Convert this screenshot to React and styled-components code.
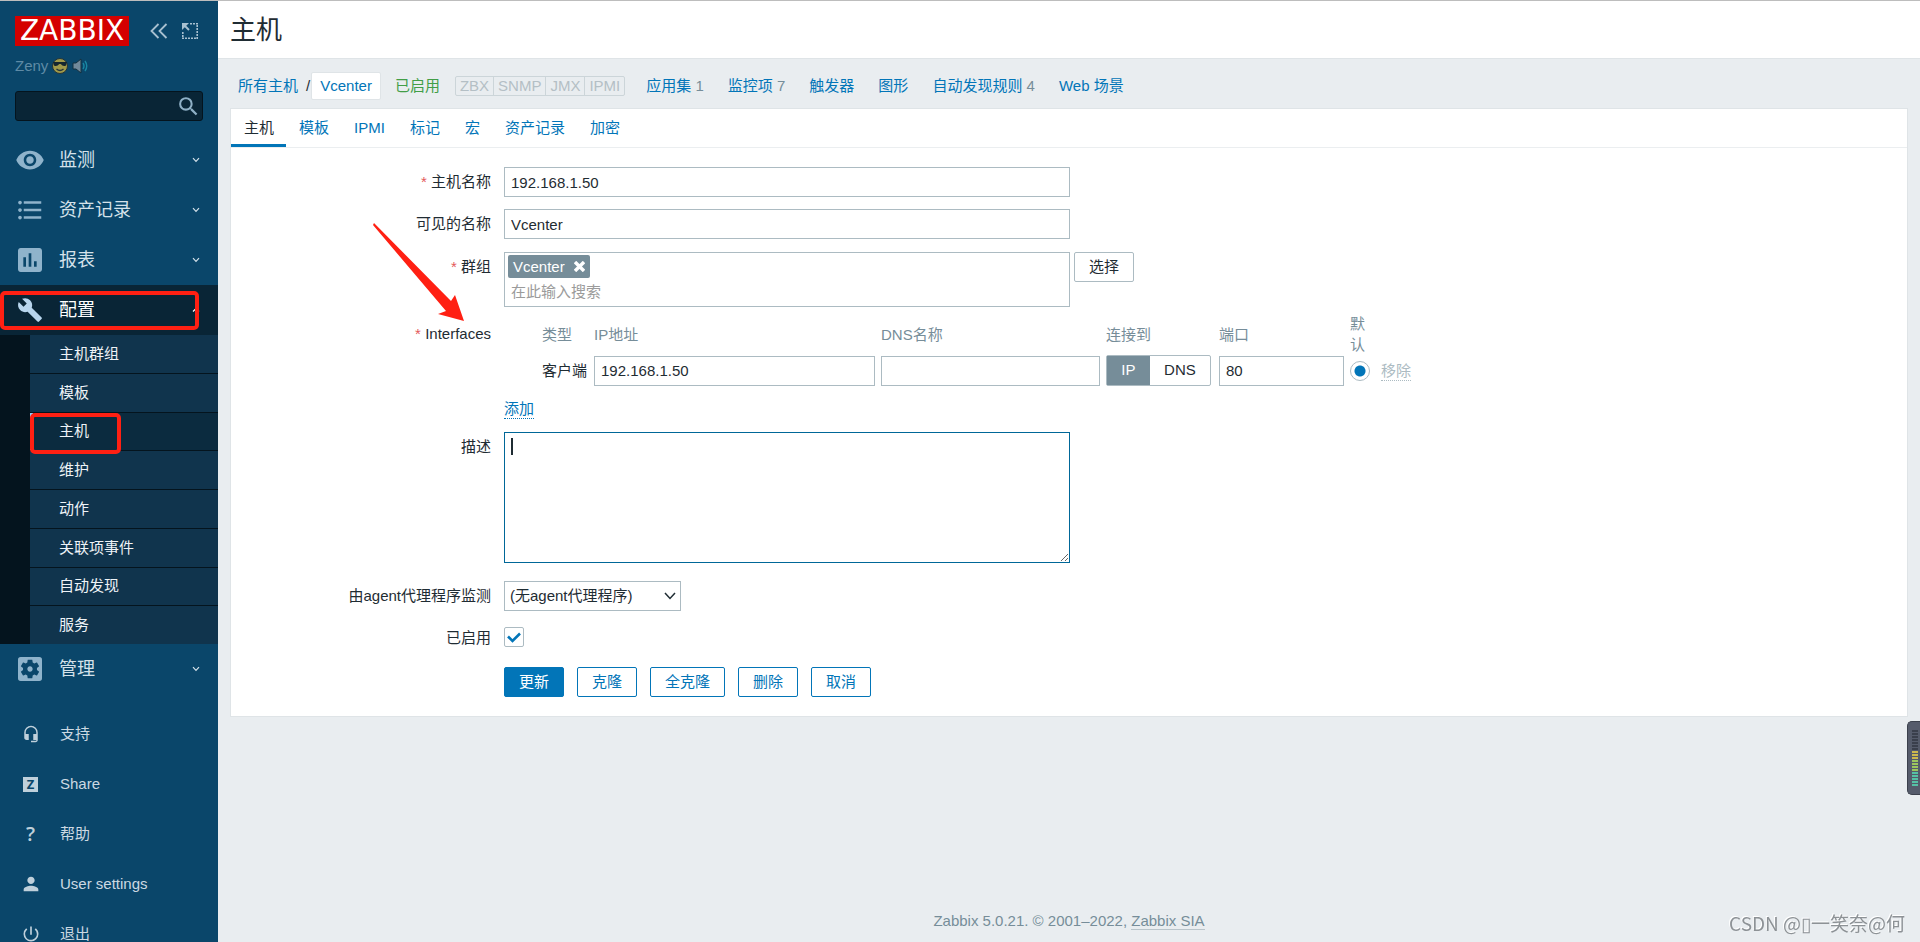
import React from "react";
import styled, { createGlobalStyle } from "styled-components";
import {
  MdVisibility,
  MdFormatListBulleted,
  MdAssessment,
  MdBuild,
  MdSettingsApplications,
  MdHeadsetMic,
  MdPerson,
  MdPowerSettingsNew,
  MdSearch,
} from "react-icons/md";

const subItems = ["主机群组", "模板", "主机", "维护", "动作", "关联项事件", "自动发现", "服务"];

const tabs = ["主机", "模板", "IPMI", "标记", "宏", "资产记录", "加密"];

const navLinks = [
  { text: "应用集", count: 1 },
  { text: "监控项", count: 7 },
  { text: "触发器" },
  { text: "图形" },
  { text: "自动发现规则", count: 4 },
  { text: "Web 场景" },
];

function Chevron({ up }) {
  return (
    <svg width="8" height="6" viewBox="0 0 8 6" fill="none" stroke="currentColor" strokeWidth="1.2">
      <path d={up ? "M1 4.5L4 1.5L7 4.5" : "M1 1.2L4 4.4L7 1.2"} />
    </svg>
  );
}

function MenuItem({ icon, text, open }) {
  return (
    <MenuLink href="#" $open={open}>
      <MenuIcon $open={open}>{icon}</MenuIcon>
      <MenuText>{text}</MenuText>
      <Chevron up={open} />
    </MenuLink>
  );
}

function Sidebar() {
  return (
    <Side>
      <SideHeader>
        <Logo href="#">ZABBIX</Logo>
        <HeadButton aria-label="Collapse sidebar">
          <svg width="18" height="16" viewBox="0 0 18 16" fill="none" stroke="currentColor" strokeWidth="1.8">
            <path d="M8.5 1L1.5 8L8.5 15M16.5 1L9.5 8L16.5 15" />
          </svg>
        </HeadButton>
        <HeadButton aria-label="Hide sidebar">
          <svg width="16" height="16" viewBox="0 0 16 16" fill="none" stroke="currentColor">
            <path d="M8 .8H16M15.2 2V16M14 15.2H0M.8 14V8" strokeWidth="1.6" strokeDasharray="2 1" />
            <path d="M1.5 1.5L7 7" strokeWidth="2" />
            <path d="M0 0H7L0 7Z" fill="currentColor" stroke="none" />
          </svg>
        </HeadButton>
      </SideHeader>

      <User>
        Zeny
        <svg width="16" height="16" viewBox="0 0 16 16">
          <circle cx="8" cy="8" r="7.5" fill="#a09a4a" stroke="#23343a" />
          <path d="M1 4H15L14 7.5Q11 9 8.8 6H7.2Q5 9 2 7.5Z" fill="#15262f" />
          <path d="M4.5 11Q8 14 11.5 11" fill="none" stroke="#23343a" strokeWidth="1.3" />
        </svg>
        <svg width="16" height="16" viewBox="0 0 16 16">
          <path d="M1 5H4L9 1V15L4 11H1Z" fill="#71899a" stroke="#15303f" />
          <path d="M11 5Q13 8 11 11M13 3Q16.5 8 13 13" fill="none" stroke="#1987a3" strokeWidth="1.4" />
        </svg>
      </User>

      <Search>
        <SearchInput aria-label="搜索" />
        <SearchButton aria-label="搜索">
          <MdSearch size={25} />
        </SearchButton>
      </Search>

      <nav>
        <MenuItem icon={<MdVisibility size={30} />} text="监测" />
        <MenuItem icon={<MdFormatListBulleted size={30} />} text="资产记录" />
        <MenuItem icon={<MdAssessment size={32} />} text="报表" />
        <OpenGroup>
          <MenuItem icon={<MdBuild size={26} />} text="配置" open />
          <MenuMark />
        </OpenGroup>
        <SubMenu>
          {subItems.map((text, i) => (
            <SubLink href="#" key={text} $active={i === 2}>
              {text}
              {i === 2 && <SubMark />}
            </SubLink>
          ))}
        </SubMenu>
        <MenuItem icon={<MdSettingsApplications size={32} />} text="管理" />
      </nav>

      <UserNav>
        <UserLink href="#">
          <UserIcon><MdHeadsetMic size={18} /></UserIcon>
          支持
        </UserLink>
        <UserLink href="#">
          <UserIcon><ShareBadge>Z</ShareBadge></UserIcon>
          Share
        </UserLink>
        <UserLink href="#">
          <UserIcon>?</UserIcon>
          帮助
        </UserLink>
        <UserLink href="#">
          <UserIcon><MdPerson size={22} /></UserIcon>
          User settings
        </UserLink>
        <UserLink href="#">
          <UserIcon><MdPowerSettingsNew size={20} /></UserIcon>
          退出
        </UserLink>
      </UserNav>
    </Side>
  );
}

function Interfaces() {
  return (
    <div>
      <IfTable>
        <colgroup>
          <col width="38" />
          <col width="52" />
          <col width="287" />
          <col width="225" />
          <col width="113" />
          <col width="131" />
          <col width="31" />
          <col width="32" />
        </colgroup>
        <thead>
          <tr>
            <th />
            <th>类型</th>
            <th>IP地址</th>
            <th>DNS名称</th>
            <th>连接到</th>
            <th>端口</th>
            <Narrow>默认</Narrow>
            <th />
          </tr>
        </thead>
        <tbody>
          <tr>
            <td />
            <td>客户端</td>
            <td><Input $width={281} aria-label="IP地址" defaultValue="192.168.1.50" /></td>
            <td><Input $width={219} aria-label="DNS名称" /></td>
            <td>
              <Segment>
                <input type="radio" id="use-ip" name="useip" defaultChecked />
                <label htmlFor="use-ip">IP</label>
                <input type="radio" id="use-dns" name="useip" />
                <label htmlFor="use-dns">DNS</label>
              </Segment>
            </td>
            <td><Input $width={125} aria-label="端口" defaultValue="80" /></td>
            <td><Radio type="radio" aria-label="默认" defaultChecked /></td>
            <td><LinkButton disabled>移除</LinkButton></td>
          </tr>
        </tbody>
      </IfTable>
      <LinkButton>添加</LinkButton>
    </div>
  );
}

function HostForm() {
  return (
    <Form onSubmit={(e) => e.preventDefault()}>
      <Row>
        <Label htmlFor="host" $required>主机名称</Label>
        <Input id="host" $width={566} defaultValue="192.168.1.50" />
      </Row>
      <Row $gap={13}>
        <Label htmlFor="visible">可见的名称</Label>
        <Input id="visible" $width={566} defaultValue="Vcenter" />
      </Row>
      <Row $gap={6}>
        <Label htmlFor="groups" $required>群组</Label>
        <Inline $gap={4}>
          <MultiSelect>
            <Tag>
              Vcenter
              <TagClose aria-label="移除 Vcenter">
                <svg width="11" height="11" viewBox="0 0 11 11" stroke="currentColor" strokeWidth="3.4">
                  <path d="M1 1L10 10M10 1L1 10" />
                </svg>
              </TagClose>
            </Tag>
            <GroupInput id="groups" placeholder="在此输入搜索" />
          </MultiSelect>
          <Button $grey>选择</Button>
        </Inline>
      </Row>
      <Row $gap={13}>
        <Label as="span" $required $height={42}>Interfaces</Label>
        <Interfaces />
        <Arrow width="94" height="100" viewBox="0 0 94 100">
          <path d="M1 0L78 78L82 72L91 98L65 91L73 88L0 2Z" fill="#ff2013" />
        </Arrow>
      </Row>
      <Row $gap={18}>
        <Label htmlFor="description">描述</Label>
        <AreaWrap>
          <TextArea id="description" />
          <Caret />
        </AreaWrap>
      </Row>
      <Row>
        <Label htmlFor="proxy">由agent代理程序监测</Label>
        <SelectWrap>
          <Select id="proxy">
            <option>(无agent代理程序)</option>
          </Select>
          <svg width="12" height="8" viewBox="0 0 12 8" fill="none" stroke="#1f2c33" strokeWidth="1.5">
            <path d="M1 1L6 6.5L11 1" />
          </svg>
        </SelectWrap>
      </Row>
      <Row $gap={15}>
        <Label htmlFor="enabled">已启用</Label>
        <CheckWrap>
          <CheckBox type="checkbox" id="enabled" defaultChecked />
          <svg width="14" height="11" viewBox="0 0 14 11" fill="none" stroke="#0275b8" strokeWidth="2.6">
            <path d="M1 4.5L5.5 9L13 1.5" />
          </svg>
        </CheckWrap>
      </Row>
      <Row $gap={19}>
        <span />
        <Inline $gap={13}>
          <Button $primary>更新</Button>
          <Button>克隆</Button>
          <Button>全克隆</Button>
          <Button>删除</Button>
          <Button>取消</Button>
        </Inline>
      </Row>
    </Form>
  );
}

export default function App() {
  return (
    <Page>
      <GlobalStyle />
      <Sidebar />
      <Main>
        <Header>
          <h1>主机</h1>
        </Header>

        <HostNav>
          <Crumbs>
            <a href="#">所有主机</a>
            <span>/</span>
            <Current href="#">Vcenter</Current>
          </Crumbs>
          <Enabled>已启用</Enabled>
          <Badges>
            <span>ZBX</span>
            <span>SNMP</span>
            <span>JMX</span>
            <span>IPMI</span>
          </Badges>
          <NavLinks>
            {navLinks.map((l) => (
              <span key={l.text}>
                <a href="#">{l.text}</a>
                {l.count && <sup> {l.count}</sup>}
              </span>
            ))}
          </NavLinks>
        </HostNav>

        <Panel>
          <Tabs>
            {tabs.map((t, i) => (
              <Tab href="#" key={t} $active={i === 0}>{t}</Tab>
            ))}
          </Tabs>
          <HostForm />
        </Panel>

        <Footer>
          Zabbix 5.0.21. © 2001–2022, <a href="#">Zabbix SIA</a>
        </Footer>
      </Main>

      <Meter>
        {Array.from({ length: 19 }, (_, i) => (
          <MeterBar key={i} $level={i} />
        ))}
      </Meter>
      <Watermark>CSDN @▯一笑奈@何</Watermark>
    </Page>
  );
}

const GlobalStyle = createGlobalStyle`
  * {
    box-sizing: border-box;
  }
  body {
    margin: 0;
    background-color: #e9edf0;
    color: #1f2c33;
    font-family: "Liberation Sans", "Noto Sans CJK SC", sans-serif;
    font-size: 15px;
    line-height: 20px;
  }
  a {
    color: #0275b8;
    text-decoration: none;
  }
  input, button, select, textarea {
    font: inherit;
    color: inherit;
    margin: 0;
    outline: none;
  }
  button {
    padding: 0;
    border: none;
    background: none;
    cursor: pointer;
  }
  svg {
    display: block;
    flex: none;
  }
`;

const Page = styled.div`
  display: flex;
  height: 100vh;
  overflow: hidden;
  border-top: 1px solid #bdbdbd;
`;

/* sidebar */

const Side = styled.aside`
  flex: none;
  width: 218px;
  overflow: hidden;
  background-color: #0a466a;
`;

const SideHeader = styled.div`
  display: flex;
  align-items: center;
  padding: 15px 21px 0 15px;
`;

const Logo = styled.a`
  display: flex;
  justify-content: center;
  flex: none;
  width: 114px;
  height: 30px;
  margin-right: 7px;
  background-color: #d40000;
  color: white;
  font-family: "DejaVu Sans", sans-serif;
  font-size: 28px;
  line-height: 30px;
`;

const HeadButton = styled.button`
  display: flex;
  margin-left: 14px;
  color: #a8c0d0;
`;

const User = styled.div`
  display: flex;
  align-items: center;
  gap: 4px;
  padding: 10px 15px 0;
  color: #5f8ba6;
`;

const Search = styled.form`
  display: flex;
  align-items: center;
  height: 30px;
  margin: 15px 15px 14px;
  border: 1px solid #04141e;
  border-radius: 3px;
  background-color: #092536;
`;

const SearchInput = styled.input`
  flex: 1;
  min-width: 0;
  border: none;
  background: none;
  color: white;
`;

const SearchButton = styled.button`
  padding-right: 1px;
  color: #8fb0c6;
`;

const MenuLink = styled.a`
  display: flex;
  align-items: center;
  height: 50px;
  padding: 0 18px 0 15px;
  background-color: ${(p) => (p.$open ? "#092536" : "transparent")};
  color: ${(p) => (p.$open ? "#ffffff" : "#d5e2ea")};
  font-size: 18px;
`;

const MenuIcon = styled.span`
  display: flex;
  justify-content: center;
  width: 30px;
  margin-right: 14px;
  color: ${(p) => (p.$open ? "#b8d6ee" : "#8fb3cb")};
`;

const MenuText = styled.span`
  flex: 1;
`;

const OpenGroup = styled.div`
  position: relative;
`;

const MenuMark = styled.div`
  position: absolute;
  top: 6px;
  left: 0;
  width: 199px;
  height: 39px;
  border: 4px solid #ff2013;
  border-radius: 5px;
`;

const SubMenu = styled.div`
  display: grid;
  grid-auto-rows: 1fr;
  gap: 1px;
  height: 309px;
  padding-left: 30px;
  background-color: #04141e;
`;

const SubLink = styled.a`
  position: relative;
  display: flex;
  align-items: center;
  padding-left: ${(p) => (p.$active ? 26 : 29)}px;
  border-left: ${(p) => (p.$active ? "3px solid #8ecbf5" : "none")};
  background-color: ${(p) => (p.$active ? "#0b2b3f" : "#10344d")};
  color: #eef3f7;
`;

const SubMark = styled.div`
  position: absolute;
  top: 0;
  left: -3px;
  width: 91px;
  height: 41px;
  border: 4px solid #ff2013;
  border-radius: 5px;
  z-index: 1;
`;

const UserNav = styled.div`
  padding-top: 15px;
`;

const UserLink = styled.a`
  display: flex;
  align-items: center;
  height: 50px;
  padding-left: 15px;
  color: #ccd9e2;
`;

const UserIcon = styled.span`
  display: flex;
  justify-content: center;
  width: 31px;
  margin-right: 14px;
  color: #bfd0db;
  font-family: "Open Sans", sans-serif;
  font-size: 20px;
  font-weight: 600;
`;

const ShareBadge = styled.span`
  width: 15px;
  height: 15px;
  background-color: #bfd0db;
  color: #0a466a;
  font-size: 13px;
  font-weight: bold;
  line-height: 15px;
  text-align: center;
`;

/* content */

const Main = styled.main`
  display: flex;
  flex-direction: column;
  flex: 1;
  min-width: 0;
`;

const Header = styled.header`
  padding: 12px 12px 10px;
  border-bottom: 1px solid #dfe4e7;
  background-color: white;

  h1 {
    margin: 0;
    font-size: 26px;
    font-weight: normal;
    line-height: 35px;
  }
`;

const HostNav = styled.div`
  display: flex;
  align-items: center;
  height: 49px;
  padding: 5px 20px 0;
`;

const Crumbs = styled.div`
  display: flex;
  align-items: center;

  span {
    margin: 0 1px 0 8px;
  }
`;

const Current = styled.a`
  padding: 3px 8px;
  border: 1px solid #dfe4e7;
  border-radius: 2px;
  background-color: white;
`;

const Enabled = styled.span`
  margin: 0 15px 0 14px;
  color: #429e47;
`;

const Badges = styled.div`
  display: flex;
  margin-right: 21px;
  border: 1px solid #ccd5d9;
  border-radius: 2px;
  color: #b4bfc5;
  line-height: 18px;

  span {
    padding: 0 4px;
  }
  span + span {
    border-left: 1px solid #ccd5d9;
  }
`;

const NavLinks = styled.nav`
  display: flex;
  gap: 24px;

  sup {
    color: #768d99;
    font-size: 15px;
    line-height: 20px;
    vertical-align: baseline;
    white-space: pre;
  }
`;

const Panel = styled.section`
  margin: 0 12px;
  border: 1px solid #dfe4e7;
  background-color: white;
`;

const Tabs = styled.nav`
  display: flex;
  height: 39px;
  border-bottom: 1px solid #ebeef0;
`;

const Tab = styled.a`
  padding: 9px 12px 0 13px;
  border-bottom: 3px solid ${(p) => (p.$active ? "#0275b8" : "transparent")};
  color: ${(p) => (p.$active ? "#1f2c33" : "#0275b8")};
`;

const Form = styled.form`
  padding-top: 19px;
`;

const Row = styled.div`
  position: relative;
  display: grid;
  grid-template-columns: 260px 1fr;
  column-gap: 13px;
  align-items: start;
  margin-bottom: ${(p) => p.$gap ?? 12}px;
`;

const Label = styled.label`
  line-height: ${(p) => p.$height || 29}px;
  text-align: right;

  &::before {
    content: "${(p) => (p.$required ? "* " : "")}";
    color: #e45959;
  }
`;

const Inline = styled.div`
  display: flex;
  align-items: flex-start;
  gap: ${(p) => p.$gap}px;
`;

const Input = styled.input`
  display: block;
  width: ${(p) => p.$width}px;
  height: 30px;
  padding: 0 6px;
  border: 1px solid #acbbc2;
  background-color: white;
`;

const MultiSelect = styled.div`
  width: 566px;
  height: 55px;
  padding: 2px 3px;
  border: 1px solid #acbbc2;
`;

const Tag = styled.span`
  display: inline-flex;
  align-items: center;
  gap: 9px;
  height: 23px;
  padding: 0 5px;
  border-radius: 2px;
  background-color: #768d99;
  color: white;
`;

const TagClose = styled.button`
  display: flex;
`;

const GroupInput = styled.input`
  display: block;
  width: 100%;
  height: 26px;
  padding: 0 3px;
  border: none;

  &::placeholder {
    color: #9b9b9b;
  }
`;

const Button = styled.button`
  height: 30px;
  padding: 0 14px;
  border: 1px solid ${(p) => (p.$grey ? "#acbbc2" : "#0275b8")};
  border-radius: 2px;
  background-color: ${(p) => (p.$primary ? "#0275b8" : "white")};
  color: ${(p) => (p.$primary ? "white" : p.$grey ? "#1f2c33" : "#0275b8")};
`;

const IfTable = styled.table`
  width: 909px;
  margin-bottom: 13px;
  border-collapse: collapse;
  table-layout: fixed;

  th {
    height: 42px;
    padding: 0;
    color: #768d99;
    font-weight: normal;
    line-height: 21px;
    text-align: left;
  }
  td {
    height: 31px;
    padding: 0;
    white-space: nowrap;
  }
`;

const Narrow = styled.th`
  && {
    padding-right: 12px;
  }
`;

const Segment = styled.div`
  display: flex;
  width: 105px;
  height: 31px;
  border: 1px solid #acbbc2;
  border-radius: 2px;

  input {
    position: absolute;
    opacity: 0;
    pointer-events: none;
  }
  label {
    flex: auto;
    line-height: 28px;
    text-align: center;
  }
  input:checked + label {
    background-color: #768d99;
    color: white;
  }
`;

const Radio = styled.input`
  display: block;
  appearance: none;
  width: 20px;
  height: 20px;
  border: 1px solid #acbbc2;
  border-radius: 50%;
  background: radial-gradient(circle, #0275b8 5px, white 6px);
`;

const LinkButton = styled.button`
  display: block;
  height: 20px;
  border-bottom: 1px dotted;
  color: #0275b8;
  line-height: 19px;

  &:disabled {
    color: #acbbc2;
  }
`;

const AreaWrap = styled.div`
  position: relative;
`;

const TextArea = styled.textarea`
  display: block;
  width: 566px;
  height: 131px;
  padding: 4px 6px;
  border: 1px solid #006798;
  background-color: white;
`;

const Caret = styled.span`
  position: absolute;
  top: 6px;
  left: 7px;
  width: 2px;
  height: 17px;
  background-color: #1f2c33;
`;

const SelectWrap = styled.div`
  position: relative;
  width: 177px;

  svg {
    position: absolute;
    top: 11px;
    right: 5px;
    pointer-events: none;
  }
`;

const Select = styled.select`
  display: block;
  appearance: none;
  width: 100%;
  height: 30px;
  padding: 0 5px;
  border: 1px solid #acbbc2;
  border-radius: 0;
  background-color: white;
`;

const CheckWrap = styled.div`
  position: relative;
  padding: 4px 0;

  svg {
    position: absolute;
    top: 9px;
    left: 3px;
    pointer-events: none;
  }
`;

const CheckBox = styled.input`
  display: block;
  appearance: none;
  width: 20px;
  height: 20px;
  border: 1px solid #acbbc2;
  border-radius: 2px;
`;

const Arrow = styled.svg`
  position: absolute;
  top: -90px;
  left: 142px;
`;

const Footer = styled.footer`
  margin-top: auto;
  padding-bottom: 11px;
  color: #768d99;
  text-align: center;

  a {
    border-bottom: 1px solid #b9c4ca;
    color: #768d99;
  }
`;

/* floating bits */

const Meter = styled.div`
  position: fixed;
  top: 721px;
  right: 0;
  display: grid;
  gap: 1px;
  align-content: center;
  width: 13px;
  height: 74px;
  padding-left: 4px;
  border: 1px solid #3b404c;
  border-right: none;
  border-radius: 5px 0 0 5px;
  background-color: #555b6b;
`;

const MeterBar = styled.span`
  width: 6px;
  height: 2px;
  background-color: ${(p) =>
    p.$level < 7 ? "#3a3f4c" : p.$level < 10 ? "#cdb94e" : p.$level < 14 ? "#9cc65e" : "#55c2a5"};
`;

const Watermark = styled.div`
  position: fixed;
  right: 15px;
  bottom: 9px;
  color: #8d9296;
  font-family: "Noto Sans CJK SC", sans-serif;
  font-size: 19px;
  text-shadow: -1px -1px 0 white;
`;
